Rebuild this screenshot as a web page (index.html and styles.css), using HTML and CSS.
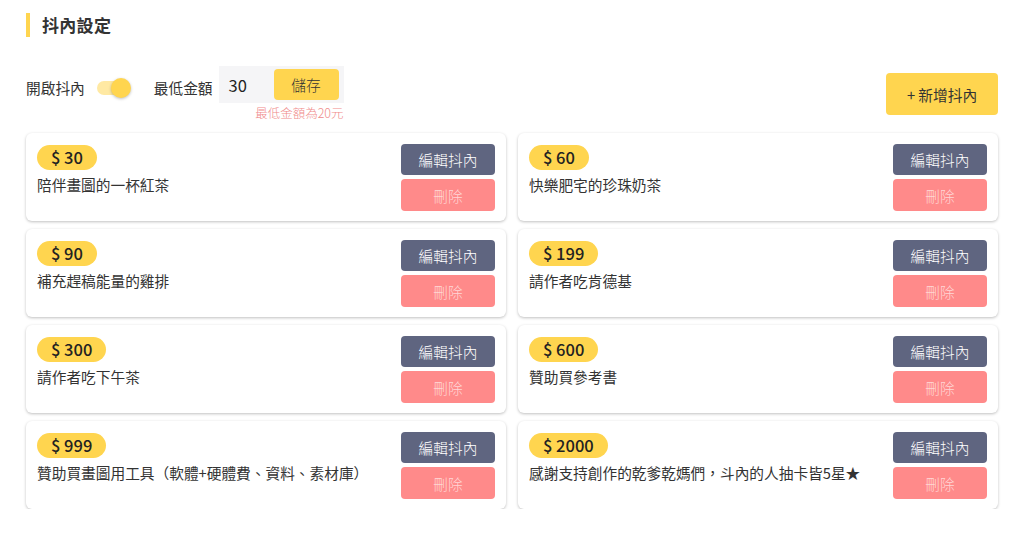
FILE: index.html
```html
<!DOCTYPE html>
<html lang="zh-Hant">
<head>
<meta charset="utf-8">
<link rel="stylesheet" href="styles.css">
</head>
<body>
<div class="page">
  <h1 class="title">抖內設定</h1>
  <div class="toolbar">
    <div class="controls">
      <span class="label">開啟抖內</span>
      <span class="toggle"><span class="track"></span><span class="knob"></span></span>
      <span class="label min-label">最低金額</span>
      <div class="min-box">
        <div class="min-input">
          <span class="min-value">30</span>
          <button class="btn-save">儲存</button>
        </div>
        <div class="hint">最低金額為20元</div>
      </div>
    </div>
    <button class="btn-add">+ 新增抖內</button>
  </div>
  <div class="grid">
    <div class="card"><div class="info"><span class="badge">$ 30</span><div class="desc">陪伴畫圖的一杯紅茶</div></div><div class="actions"><button class="btn-edit">編輯抖內</button><button class="btn-del">刪除</button></div></div>
    <div class="card"><div class="info"><span class="badge">$ 60</span><div class="desc">快樂肥宅的珍珠奶茶</div></div><div class="actions"><button class="btn-edit">編輯抖內</button><button class="btn-del">刪除</button></div></div>
    <div class="card"><div class="info"><span class="badge">$ 90</span><div class="desc">補充趕稿能量的雞排</div></div><div class="actions"><button class="btn-edit">編輯抖內</button><button class="btn-del">刪除</button></div></div>
    <div class="card"><div class="info"><span class="badge">$ 199</span><div class="desc">請作者吃肯德基</div></div><div class="actions"><button class="btn-edit">編輯抖內</button><button class="btn-del">刪除</button></div></div>
    <div class="card"><div class="info"><span class="badge">$ 300</span><div class="desc">請作者吃下午茶</div></div><div class="actions"><button class="btn-edit">編輯抖內</button><button class="btn-del">刪除</button></div></div>
    <div class="card"><div class="info"><span class="badge">$ 600</span><div class="desc">贊助買參考書</div></div><div class="actions"><button class="btn-edit">編輯抖內</button><button class="btn-del">刪除</button></div></div>
    <div class="card"><div class="info"><span class="badge">$ 999</span><div class="desc">贊助買畫圖用工具（軟體+硬體費、資料、素材庫）</div></div><div class="actions"><button class="btn-edit">編輯抖內</button><button class="btn-del">刪除</button></div></div>
    <div class="card"><div class="info"><span class="badge">$ 2000</span><div class="desc">感謝支持創作的乾爹乾媽們，斗內的人抽卡皆5星★</div></div><div class="actions"><button class="btn-edit">編輯抖內</button><button class="btn-del">刪除</button></div></div>
  </div>
</div>
</body>
</html>
```
FILE: styles.css
```css
* { box-sizing: border-box; }
html, body { margin: 0; padding: 0; background: #fff; }
body {
  font-family: "Noto Sans CJK TC", "Noto Sans", sans-serif;
  color: #333;
  font-size: 14.7px;
}
.page { padding: 13px 26px 0 26px; width: 1024px; }
.title {
  margin: 0;
  font-size: 17px;
  font-weight: 700;
  color: #333;
  line-height: 24px;
  border-left: 4px solid #ffd54f;
  padding-left: 12px;
  letter-spacing: 0.3px;
}
.toolbar {
  display: flex;
  justify-content: space-between;
  align-items: flex-start;
  margin-top: 29px;
}
.controls { display: flex; align-items: flex-start; }
.label { font-size: 14.7px; line-height: 20px; margin-top: 12px; color: #333; }
.toggle { position: relative; width: 36px; height: 22px; margin: 11px 21px 0 12px; display: inline-block; }
.toggle .track {
  position: absolute; left: 0; top: 4px; width: 33px; height: 14px;
  border-radius: 7px; background: #ffe9a3;
}
.toggle .knob {
  position: absolute; left: 14px; top: 1px; width: 20px; height: 20px;
  border-radius: 50%; background: #ffd54f;
  box-shadow: 0 1px 3px rgba(0,0,0,0.25);
}
.min-label { margin-right: 6px; }
.min-box { display: flex; flex-direction: column; align-items: flex-end; margin-top: 0; }
.min-input {
  display: flex; align-items: center; justify-content: space-between;
  width: 125px; height: 37px; background: #f5f5f7; padding: 0 5px 0 10px;
}
.min-value { font-size: 16.5px; color: #222; }
.btn-save {
  width: 65px; height: 31px; border: none; border-radius: 4px;
  background: #ffd54f; color: #333; font-family: inherit; font-size: 14.7px; padding: 0; font-weight: 300;
}
.hint { font-size: 12.5px; color: #f08a8a; line-height: 14px; margin-top: 3px; font-weight: 300; }
.btn-add {
  width: 112px; height: 42px; margin-top: 7px; border: none; border-radius: 4px;
  background: #ffd54f; color: #333; font-family: inherit; font-size: 14.7px; padding: 0;
}
.grid {
  display: grid;
  grid-template-columns: 480px 480px;
  column-gap: 12px;
  row-gap: 8px;
  margin-top: 13px;
}
.card {
  height: 88px;
  background: #fff;
  border-radius: 6px;
  box-shadow: 0 1px 3px rgba(0,0,0,0.25);
  display: flex;
  justify-content: space-between;
  padding: 11px 11px 0 11px;
}
.info { display: flex; flex-direction: column; align-items: flex-start; }
.badge {
  display: inline-block;
  height: 25px; line-height: 25px;
  padding: 0 14px;
  border-radius: 13px;
  background: #ffd54f;
  color: #222;
  font-size: 16.5px;
  font-weight: 500;
  margin-top: 1px;
}
.desc { margin-top: 5px; font-size: 14.7px; line-height: 20px; color: #333; }
.actions { display: flex; flex-direction: column; gap: 4px; }
.btn-edit, .btn-del {
  width: 94px; height: 31px; border: none; border-radius: 4px;
  font-family: inherit; font-size: 14.7px; padding: 0; font-weight: 300;
}
.btn-edit { background: #5f6580; color: #fff; }
.btn-del { background: #ff8a8a; color: #ffd6d6; height: 32px; }
```
